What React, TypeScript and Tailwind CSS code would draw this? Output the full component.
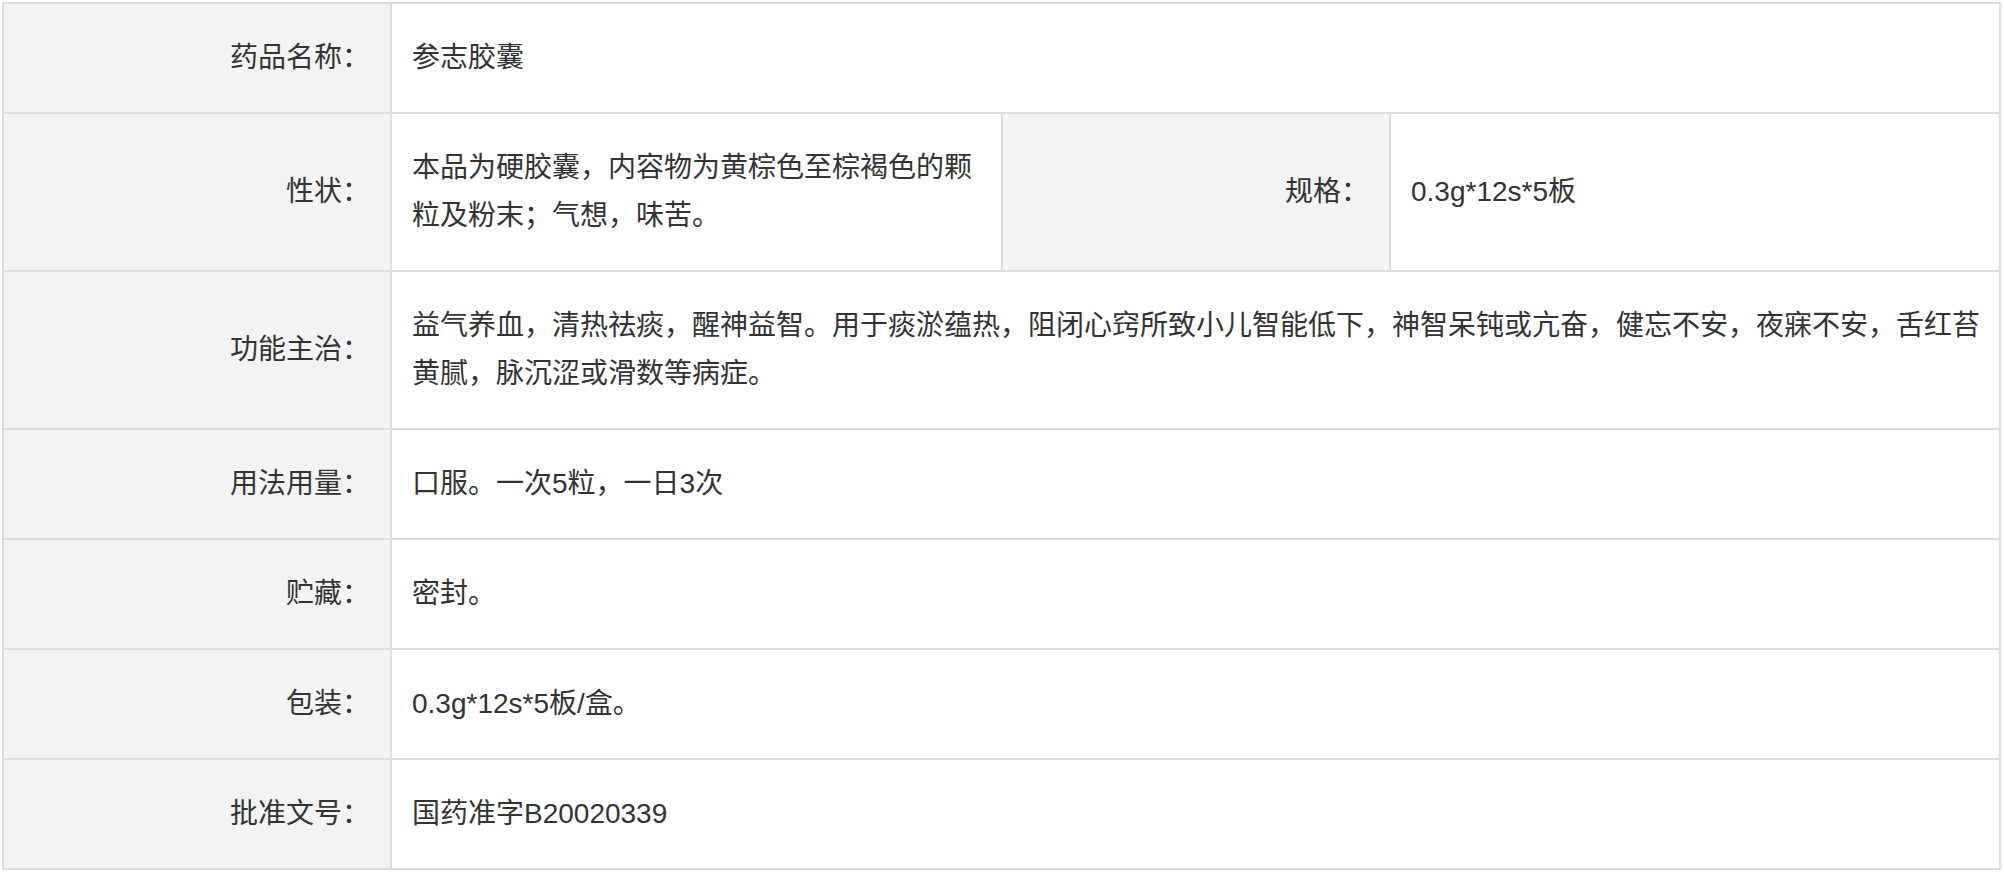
import React from "react";

const font = { fontFamily: '"Liberation Sans", "Noto Sans CJK SC", sans-serif' };

function Label({ children }: { children: React.ReactNode }) {
  return (
    <div className="bg-[#f3f3f3] px-[20px] py-[30px] text-right flex items-center justify-end">
      <span>{children}</span>
    </div>
  );
}

function Value({ children, span3 }: { children: React.ReactNode; span3?: boolean }) {
  return (
    <div className={(span3 ? "col-span-3 " : "") + "bg-white pl-[20px] pr-[18px] py-[30px] flex items-center"}>
      <span>{children}</span>
    </div>
  );
}

export default function App() {
  return (
    <div className="bg-white min-h-screen w-[2004px]" style={font}>
      <div className="ml-[2px] mt-[2px] w-[1999px] grid grid-cols-[386px_609px_386px_608px] gap-[2px] p-[2px] bg-[#dddddd] text-[28px] leading-[48px] text-[#333333]">
        <Label>药品名称：</Label>
        <Value span3>参志胶囊</Value>

        <Label>性状：</Label>
        <Value>本品为硬胶囊，内容物为黄棕色至棕褐色的颗粒及粉末；气想，味苦。</Value>
        <Label>规格：</Label>
        <Value>0.3g*12s*5板</Value>

        <Label>功能主治：</Label>
        <Value span3>
          益气养血，清热祛痰，醒神益智。用于痰淤蕴热，阻闭心窍所致小儿智能低下，神智呆钝或亢奋，健忘不安，夜寐不安，舌红苔黄腻，脉沉涩或滑数等病症。
        </Value>

        <Label>用法用量：</Label>
        <Value span3>口服。一次5粒，一日3次</Value>

        <Label>贮藏：</Label>
        <Value span3>密封。</Value>

        <Label>包装：</Label>
        <Value span3>0.3g*12s*5板/盒。</Value>

        <Label>批准文号：</Label>
        <Value span3>国药准字B20020339</Value>
      </div>
    </div>
  );
}
